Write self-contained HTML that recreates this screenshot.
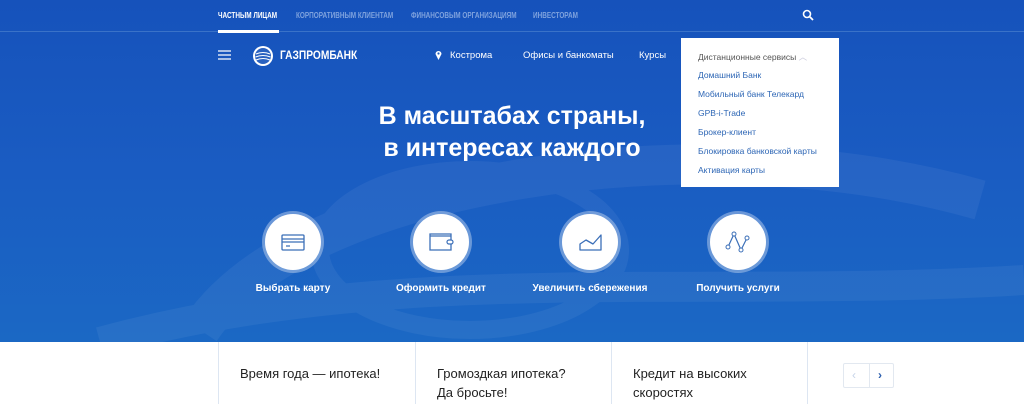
<!DOCTYPE html>
<html><head><meta charset="utf-8"><style>
*{margin:0;padding:0;box-sizing:border-box}
body{width:1024px;height:404px;overflow:hidden;font-family:"Liberation Sans","Noto Sans CJK SC",sans-serif;background:#fff;position:relative}
.hero{position:absolute;left:0;top:0;width:1024px;height:342px;background:linear-gradient(180deg,#1652bb 0%,#1a5cc2 50%,#1b68c4 100%);overflow:hidden}
.top{position:absolute;top:0;left:0;width:1024px;height:32px;border-bottom:1px solid #3a72c8}
.top span{position:absolute;top:11px;font-size:8px;font-weight:bold;color:#7fa3de;transform:scaleX(.8);transform-origin:0 0;white-space:nowrap}
.nav{position:absolute;top:50px;font-size:9.5px;color:#fff}
.dd{position:absolute;left:681px;top:38px;width:158px;height:149px;background:#fff}
.dd div{position:absolute;left:17px;font-size:8.5px;color:#2d66b5}
.h1{position:absolute;top:100px;width:1024px;text-align:center;color:#fff;font-size:25px;font-weight:bold;line-height:32px}
.c{position:absolute;top:214px;width:56px;height:56px;border-radius:50%;background:#fff;box-shadow:0 0 0 3px rgba(255,255,255,.35)}
.c svg{position:absolute;left:14px;top:14px}
.l{position:absolute;top:283px;color:#fff;font-size:10px;font-weight:bold;text-align:center;width:160px}
.card{position:absolute;top:342px;height:62px;border-left:1px solid #dde6f2;font-size:13px;color:#222;padding:22px 0 0 21px;line-height:19px}
</style></head><body>
<div class="hero">
<svg width="1024" height="342" style="position:absolute;left:0;top:0;opacity:.05"><path d="M200 330 C 300 180, 700 120, 980 200" stroke="#fff" stroke-width="40" fill="none"/><path d="M100 342 C 400 260, 700 300, 1024 280" stroke="#fff" stroke-width="30" fill="none"/><ellipse cx="470" cy="250" rx="150" ry="80" stroke="#fff" stroke-width="18" fill="none"/></svg>
<div class="top">
<span style="left:218px;color:#fff">ЧАСТНЫМ ЛИЦАМ</span>
<span style="left:296px">КОРПОРАТИВНЫМ КЛИЕНТАМ</span>
<span style="left:411px">ФИНАНСОВЫМ ОРГАНИЗАЦИЯМ</span>
<span style="left:533px">ИНВЕСТОРАМ</span>
<div style="position:absolute;left:218px;top:30px;width:61px;height:3px;background:#fff"></div>
<svg style="position:absolute;left:802px;top:9px" width="12" height="12"><circle cx="5" cy="5" r="3.5" stroke="#fff" stroke-width="1.6" fill="none"/><path d="M7.5 7.5 L11 11" stroke="#fff" stroke-width="1.8"/></svg>
</div>
<svg style="position:absolute;left:218px;top:50px" width="14" height="10"><path d="M0 1H13M0 5H13M0 9H13" stroke="#fff" stroke-width="1.3"/></svg>
<svg style="position:absolute;left:252px;top:45px" width="22" height="22"><circle cx="11" cy="11" r="10" fill="#fff"/><circle cx="11" cy="11" r="8" fill="#2a62c0"/><path d="M4 9 Q11 6 18 9 M3.5 12 Q11 9 18.5 12 M4 15 Q11 12 18 15" stroke="#fff" stroke-width="1.1" fill="none"/></svg>
<div class="nav" style="left:280px;top:48px;font-size:12px;font-weight:bold;transform:scaleX(.85);transform-origin:0 0">ГАЗПРОМБАНК</div>
<svg style="position:absolute;left:435px;top:50px" width="7" height="10"><path d="M3.5 10 L0.5 4 A3 3 0 1 1 6.5 4Z" fill="#fff"/><circle cx="3.5" cy="3.5" r="1.1" fill="#1a5bbf"/></svg>
<div class="nav" style="left:450px">Кострома</div>
<div class="nav" style="left:523px">Офисы и банкоматы</div>
<div class="nav" style="left:639px">Курсы</div>
<div class="dd">
<div style="top:13px;color:#555">Дистанционные сервисы <span style="color:#ccd;position:static">︿</span></div>
<div style="top:32px">Домашний Банк</div>
<div style="top:51px">Мобильный банк Телекард</div>
<div style="top:70px">GPB-i-Trade</div>
<div style="top:89px">Брокер-клиент</div>
<div style="top:108px">Блокировка банковской карты</div>
<div style="top:127px">Активация карты</div>
</div>
<div class="h1">В масштабах страны,<br>в интересах каждого</div>
<div class="c" style="left:265px"><svg width="28" height="28"><rect x="3" y="7" width="22" height="15" rx="1" stroke="#3b6fb8" stroke-width="1.3" fill="none"/><path d="M3 11H25M3 14H25M7 18H11" stroke="#3b6fb8" stroke-width="1.2"/></svg></div>
<div class="c" style="left:413px"><svg width="28" height="28"><path d="M3 6H24V22H3Z M3 8H24" stroke="#3b6fb8" stroke-width="1.3" fill="none"/><rect x="20" y="12" width="6" height="4" rx="2" stroke="#3b6fb8" stroke-width="1.2" fill="#fff"/></svg></div>
<div class="c" style="left:562px"><svg width="28" height="28"><path d="M4 22V16L10 12L17 16L25 7V22Z" stroke="#3b6fb8" stroke-width="1.3" fill="none" stroke-linejoin="round"/></svg></div>
<div class="c" style="left:710px"><svg width="28" height="28"><path d="M4 19L10 6L17 22L23 10" stroke="#3b6fb8" stroke-width="1.2" fill="none"/><circle cx="4" cy="19" r="2" fill="#fff" stroke="#3b6fb8"/><circle cx="10" cy="6" r="2" fill="#fff" stroke="#3b6fb8"/><circle cx="17" cy="22" r="2" fill="#fff" stroke="#3b6fb8"/><circle cx="23" cy="10" r="2" fill="#fff" stroke="#3b6fb8"/></svg></div>
<div class="l" style="left:213px">Выбрать карту</div>
<div class="l" style="left:361px">Оформить кредит</div>
<div class="l" style="left:510px">Увеличить сбережения</div>
<div class="l" style="left:658px">Получить услуги</div>
</div>
<div class="card" style="left:218px;width:197px">Время года — ипотека!</div>
<div class="card" style="left:415px;width:196px">Громоздкая ипотека?<br>Да бросьте!</div>
<div class="card" style="left:611px;width:197px;border-right:1px solid #dde6f2">Кредит на высоких<br>скоростях</div>
<div style="position:absolute;left:843px;top:363px;width:51px;height:25px;border:1px solid #e2e8f0;border-radius:2px"><div style="position:absolute;left:25px;top:0;width:1px;height:23px;background:#e2e8f0"></div><span style="position:absolute;left:8px;top:4px;color:#c5d3e8;font-size:12px">‹</span><span style="position:absolute;left:34px;top:4px;color:#2d5fae;font-size:12px;font-weight:bold">›</span></div>
</body></html>
